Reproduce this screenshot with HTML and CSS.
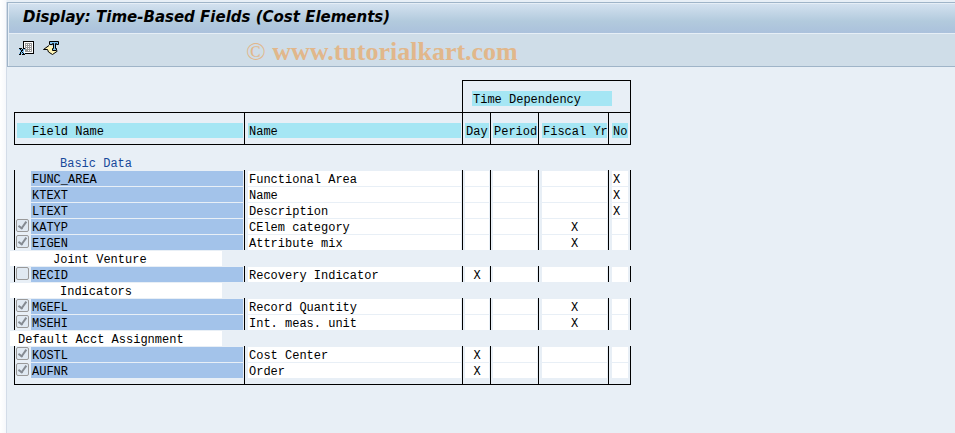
FILE: index.html
```html
<!DOCTYPE html>
<html lang="en">
<head>
    <meta charset="UTF-8">
    <meta name="viewport" content="width=device-width, initial-scale=1.0">
    <title>Display: Time-Based Fields (Cost Elements)</title>
    <link rel="stylesheet" href="styles.css">
</head>
<body>

    <div class="window">
        <header class="top">
            <h1 class="title">Display: Time-Based Fields (Cost Elements)</h1>

            <!-- Toolbar -->
            <div class="toolbar">
                <button type="button" class="tool" aria-label="Spreadsheet">
                    <svg width="16" height="16" viewBox="0 0 16 16" shape-rendering="crispEdges">
                        <path d="M4 0h11v13H4z" fill="#000"/>
                        <path d="M5 1h9v11H5z" fill="#fff"/>
                        <path d="M6 2h7v9H6z" fill="#999"/>
                        <path d="M7 3h1v1H7zM9 3h1v1H9zM11 3h1v1h-1zM7 5h1v1H7zM9 5h1v1H9zM11 5h1v1h-1zM7 7h1v1H7zM9 7h1v1H9zM11 7h1v1h-1zM9 9h1v1H9zM11 9h1v1h-1z" fill="#fff"/>
                        <path d="M0 7h3v1h1V7h2v2H5v3h1v2H3v-1H2v1H0v-2h1V9H0z" fill="#7fc0ee"/>
                        <path d="M0 7h3v1H0zM4 7h2v1H4zM1 8h1v1H1zM3 8h1v2H3zM2 9h1v2H2zM1 11h1v2H1zM3 11h1v1H3zM4 12h1v1H4zM0 13h2v1H0zM3 13h3v1H3z" fill="#000"/>
                    </svg>
                </button>
                <button type="button" class="tool" aria-label="Choose layout">
                    <svg width="16" height="16" viewBox="0 0 16 16">
                        <path d="M.5 8.500L6 4.500L9 5L14 10.500L10 13.500L6 12L5 9.500z" fill="#fdf3b5"/>
                        <path d="M.5 8.500L6 4.500M.5 8.500H4.500L5.500 11L9.500 13.500L14.500 10" fill="none" stroke="#000"/>
                        <path d="M6.500 .5h9v3h-2v-1h-1v5h1v2h-4v-2h1v-5h-1v1h-3z" fill="#7fc0ee" stroke="#000"/>
                    </svg>
                </button>
                <span class="watermark"><span class="copy">©</span> www.tutorialkart.com</span>
            </div>
        </header>

        <main class="content">
            <table class="fields">
                <colgroup>
                    <col class="col-field">
                    <col class="col-name">
                    <col class="col-day">
                    <col class="col-period">
                    <col class="col-fiscal">
                    <col class="col-no">
                </colgroup>
                <thead>
                    <tr class="group">
                        <td colspan="2"></td>
                        <th colspan="4" scope="colgroup"><span class="cell time">Time Dependency</span></th>
                    </tr>
                    <tr class="heads">
                        <th scope="col"><span class="cell first">Field Name</span></th>
                        <th scope="col" class="wide"><span class="cell">Name</span></th>
                        <th scope="col"><span class="cell">Day</span></th>
                        <th scope="col"><span class="cell">Period</span></th>
                        <th scope="col" class="wide"><span class="cell">Fiscal Yr</span></th>
                        <th scope="col" class="wide"><span class="cell">No</span></th>
                    </tr>
                </thead>
                <tbody>
                    <tr class="section intro"><th colspan="6"><span class="cell short">Basic Data</span></th></tr>
                    <tr class="row">
                        <td><div class="key"><span class="cell code">FUNC_AREA</span></div></td>
                        <td class="wide"><span class="cell">Functional Area</span></td>
                        <td><span class="cell"></span></td>
                        <td><span class="cell"></span></td>
                        <td class="wide"><span class="cell"></span></td>
                        <td class="wide"><span class="cell">X</span></td>
                    </tr>
                    <tr class="row">
                        <td><div class="key"><span class="cell code">KTEXT</span></div></td>
                        <td class="wide"><span class="cell">Name</span></td>
                        <td><span class="cell"></span></td>
                        <td><span class="cell"></span></td>
                        <td class="wide"><span class="cell"></span></td>
                        <td class="wide"><span class="cell">X</span></td>
                    </tr>
                    <tr class="row">
                        <td><div class="key"><span class="cell code">LTEXT</span></div></td>
                        <td class="wide"><span class="cell">Description</span></td>
                        <td><span class="cell"></span></td>
                        <td><span class="cell"></span></td>
                        <td class="wide"><span class="cell"></span></td>
                        <td class="wide"><span class="cell">X</span></td>
                    </tr>
                    <tr class="row">
                        <td><div class="key"><input type="checkbox" id="katyp" checked disabled><label class="cell code" for="katyp">KATYP</label></div></td>
                        <td class="wide"><span class="cell">CElem category</span></td>
                        <td><span class="cell"></span></td>
                        <td><span class="cell"></span></td>
                        <td class="wide"><span class="cell mark">X</span></td>
                        <td class="wide"><span class="cell"></span></td>
                    </tr>
                    <tr class="row">
                        <td><div class="key"><input type="checkbox" id="eigen" checked disabled><label class="cell code" for="eigen">EIGEN</label></div></td>
                        <td class="wide"><span class="cell">Attribute mix</span></td>
                        <td><span class="cell"></span></td>
                        <td><span class="cell"></span></td>
                        <td class="wide"><span class="cell mark">X</span></td>
                        <td class="wide"><span class="cell"></span></td>
                    </tr>
                    <tr class="section"><th colspan="6"><span class="cell medium">Joint Venture</span></th></tr>
                    <tr class="row">
                        <td><div class="key"><input type="checkbox" id="recid" disabled><label class="cell code" for="recid">RECID</label></div></td>
                        <td class="wide"><span class="cell">Recovery Indicator</span></td>
                        <td><span class="cell mark">X</span></td>
                        <td><span class="cell"></span></td>
                        <td class="wide"><span class="cell"></span></td>
                        <td class="wide"><span class="cell"></span></td>
                    </tr>
                    <tr class="section"><th colspan="6"><span class="cell short">Indicators</span></th></tr>
                    <tr class="row">
                        <td><div class="key"><input type="checkbox" id="mgefl" checked disabled><label class="cell code" for="mgefl">MGEFL</label></div></td>
                        <td class="wide"><span class="cell">Record Quantity</span></td>
                        <td><span class="cell"></span></td>
                        <td><span class="cell"></span></td>
                        <td class="wide"><span class="cell mark">X</span></td>
                        <td class="wide"><span class="cell"></span></td>
                    </tr>
                    <tr class="row">
                        <td><div class="key"><input type="checkbox" id="msehi" checked disabled><label class="cell code" for="msehi">MSEHI</label></div></td>
                        <td class="wide"><span class="cell">Int. meas. unit</span></td>
                        <td><span class="cell"></span></td>
                        <td><span class="cell"></span></td>
                        <td class="wide"><span class="cell mark">X</span></td>
                        <td class="wide"><span class="cell"></span></td>
                    </tr>
                    <tr class="section"><th colspan="6"><span class="cell long">Default Acct Assignment</span></th></tr>
                    <tr class="row">
                        <td><div class="key"><input type="checkbox" id="kostl" checked disabled><label class="cell code" for="kostl">KOSTL</label></div></td>
                        <td class="wide"><span class="cell">Cost Center</span></td>
                        <td><span class="cell mark">X</span></td>
                        <td><span class="cell"></span></td>
                        <td class="wide"><span class="cell"></span></td>
                        <td class="wide"><span class="cell"></span></td>
                    </tr>
                    <tr class="row last">
                        <td><div class="key"><input type="checkbox" id="aufnr" checked disabled><label class="cell code" for="aufnr">AUFNR</label></div></td>
                        <td class="wide"><span class="cell">Order</span></td>
                        <td><span class="cell mark">X</span></td>
                        <td><span class="cell"></span></td>
                        <td class="wide"><span class="cell"></span></td>
                        <td class="wide"><span class="cell"></span></td>
                    </tr>
                </tbody>
            </table>
        </main>
    </div>

</body>
</html>
```
FILE: styles.css
```css
* {
    box-sizing: border-box;
}

body {
    margin: 0;
    padding: 2px 0 0 6px;
    background: linear-gradient(to right, #ffffff, #f6f8fb 6px, #e8eff6 7px);
    font-family: "Liberation Mono", "Courier New", monospace;
    font-size: 12px;
    color: #000;
}

.window {
    min-height: calc(100vh - 2px);
    background-color: #e8eff6;
    border-left: 1px solid #d3dce8;
}

/* title bar and toolbar */
.top {
    border: 1px solid #9fb4c8;
    border-right: none;
}

.title {
    margin: 0;
    height: 31px;
    padding-left: 14px;
    border: 1px solid #e6eef6;
    border-right: none;
    background: linear-gradient(#d3e1ef, #b2cadd 60%, #abc1dc);
    font-family: "DejaVu Sans", Tahoma, sans-serif;
    font-size: 15px;
    font-style: italic;
    font-weight: bold;
    line-height: 26px;
}

.toolbar {
    display: flex;
    align-items: center;
    height: 32px;
    padding-left: 10px;
    border-left: 1px solid #e6eef6;
    background-color: #cfdde8;
}

.tool {
    width: 16px;
    height: 16px;
    margin: 0 8px 2px 0;
    padding: 0;
    border: none;
    background: none;
}

.tool svg {
    display: block;
}

.watermark {
    margin-left: 179px;
    font-family: "Liberation Serif", "Times New Roman", serif;
    font-size: 26px;
    font-weight: bold;
    line-height: 28px;
    padding-top: 4px;
    color: #e1b78b;
}

.copy {
    font-weight: normal;
}

/* field list */
.content {
    padding: 13px 7px;
}

.fields {
    width: 617px;
    table-layout: fixed;
    border-collapse: separate;
    border-spacing: 0;
    line-height: 18px;
}

.col-field {
    width: 230px;
}

.col-name {
    width: 218px;
}

.col-day {
    width: 28px;
}

.col-period {
    width: 48px;
}

.col-fiscal {
    width: 70px;
}

.col-no {
    width: 23px;
}

.fields th,
.fields td {
    padding: 1px 1px 0 2px;
    font-weight: normal;
    text-align: left;
    white-space: nowrap;
    vertical-align: top;
}

.fields .wide {
    padding-left: 3px;
}

.cell {
    display: block;
    height: 15px;
    padding-left: 1px;
}

.group th,
.heads th,
.row td {
    border-left: 1px solid #000;
}

.group th,
.heads th:last-child,
.row td:last-child {
    border-right: 1px solid #000;
}

.group td,
.group th {
    height: 32px;
}

.group th {
    padding-top: 10px;
    padding-left: 9px;
    border-top: 1px solid #000;
}

.heads th {
    height: 33px;
    padding-top: 10px;
    border-top: 1px solid #000;
    border-bottom: 1px solid #000;
}

.group .cell,
.heads .cell {
    background-color: #a5e6f4;
}

.time {
    width: 140px;
}

.first {
    padding-left: 15px;
}

.row .cell {
    background-color: #fff;
}

.row .mark {
    padding-left: 0;
    text-align: center;
}

.row td:first-child {
    padding-left: 1px;
}

.row td:last-child,
.heads th:last-child {
    padding-right: 2px;
}

.last td {
    height: 23px;
    border-bottom: 1px solid #000;
}

.key {
    display: flex;
    justify-content: flex-end;
    height: 15px;
}

.row .code {
    width: 212px;
    background-color: #a3c3ea;
}

.key input {
    display: grid;
    justify-content: center;
    appearance: none;
    width: 13px;
    height: 13px;
    margin: 0 auto 0 0;
    border: 1px solid #999;
    border-radius: 2px;
    background-color: #e0e9f2;
}

.key input:checked::before {
    content: "";
    box-sizing: border-box;
    width: 5px;
    height: 9px;
    border: solid #858b92;
    border-width: 0 2px 2px 0;
    transform: rotate(35deg);
}

/* section titles stick out a little to the left of the table */
.section .cell {
    width: 212px;
    margin-left: -6px;
    background-color: #fff;
}

.intro th {
    height: 25px;
    padding-top: 10px;
}

.intro .cell {
    background: none;
    color: #17499b;
}

.section .long {
    padding-left: 8px;
}

.section .medium {
    padding-left: 43px;
}

.section .short {
    padding-left: 50px;
}
```
